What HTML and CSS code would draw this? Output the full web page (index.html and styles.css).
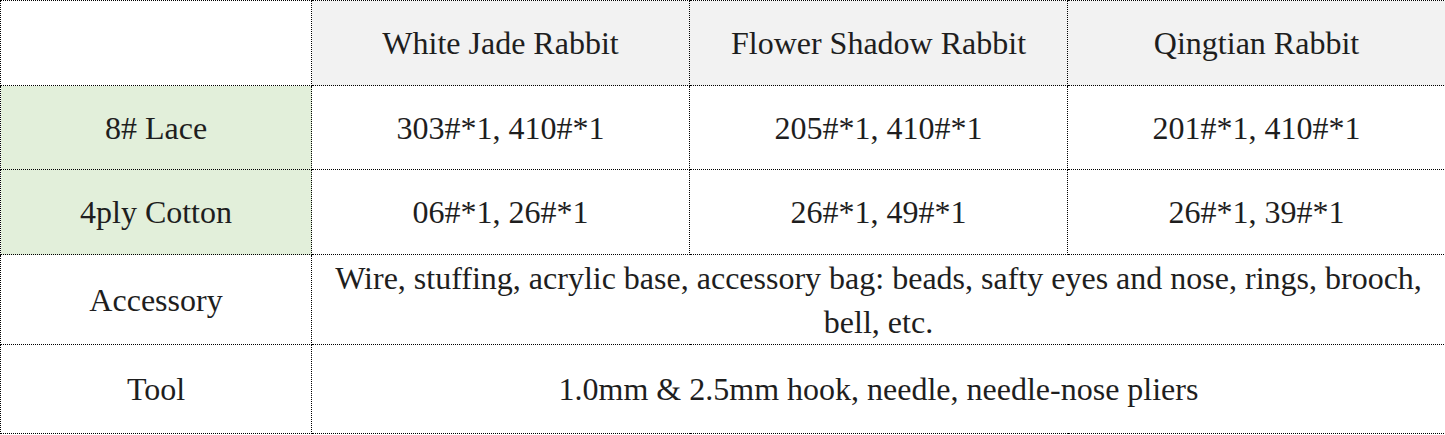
FILE: index.html
```html
<!DOCTYPE html>
<html>
<head>
<meta charset="utf-8">
<link rel="stylesheet" href="styles.css">
</head>
<body>
<table class="spec">
  <colgroup>
    <col class="c-label">
    <col class="c-item">
    <col class="c-item">
    <col class="c-item">
  </colgroup>
  <tr class="r-head">
    <td></td>
    <td class="head">White Jade Rabbit</td>
    <td class="head">Flower Shadow Rabbit</td>
    <td class="head">Qingtian Rabbit</td>
  </tr>
  <tr class="r-yarn">
    <td class="green">8# Lace</td>
    <td>303#*1, 410#*1</td>
    <td>205#*1, 410#*1</td>
    <td>201#*1, 410#*1</td>
  </tr>
  <tr class="r-yarn2">
    <td class="green">4ply Cotton</td>
    <td>06#*1, 26#*1</td>
    <td>26#*1, 49#*1</td>
    <td>26#*1, 39#*1</td>
  </tr>
  <tr class="r-acc">
    <td>Accessory</td>
    <td colspan="3">Wire, stuffing, acrylic base, accessory bag: beads, safty eyes and nose, rings, brooch, bell, etc.</td>
  </tr>
  <tr class="r-tool">
    <td>Tool</td>
    <td colspan="3">1.0mm &amp; 2.5mm hook, needle, needle-nose pliers</td>
  </tr>
</table>
</body>
</html>
```
FILE: styles.css
```css
html, body {
  margin: 0;
  padding: 0;
  background: #ffffff;
}
.spec {
  border-collapse: collapse;
  table-layout: fixed;
  width: 1445px;
  font-family: "Liberation Serif", "Times New Roman", serif;
  font-size: 32px;
  line-height: 44px;
  color: #1e1e1e;
}
.c-label { width: 311px; }
.c-item { width: 378px; }
.spec td {
  border: 1px dotted #000;
  text-align: center;
  vertical-align: middle;
  padding: 0;
}
.r-head td { height: 84px; }
.r-yarn td { height: 83px; }
.r-yarn2 td { height: 84px; }
.r-acc td { height: 89px; }
.r-tool td { height: 88px; }
.head { background: #f2f2f2; }
.green { background: #e2efda; }
```
